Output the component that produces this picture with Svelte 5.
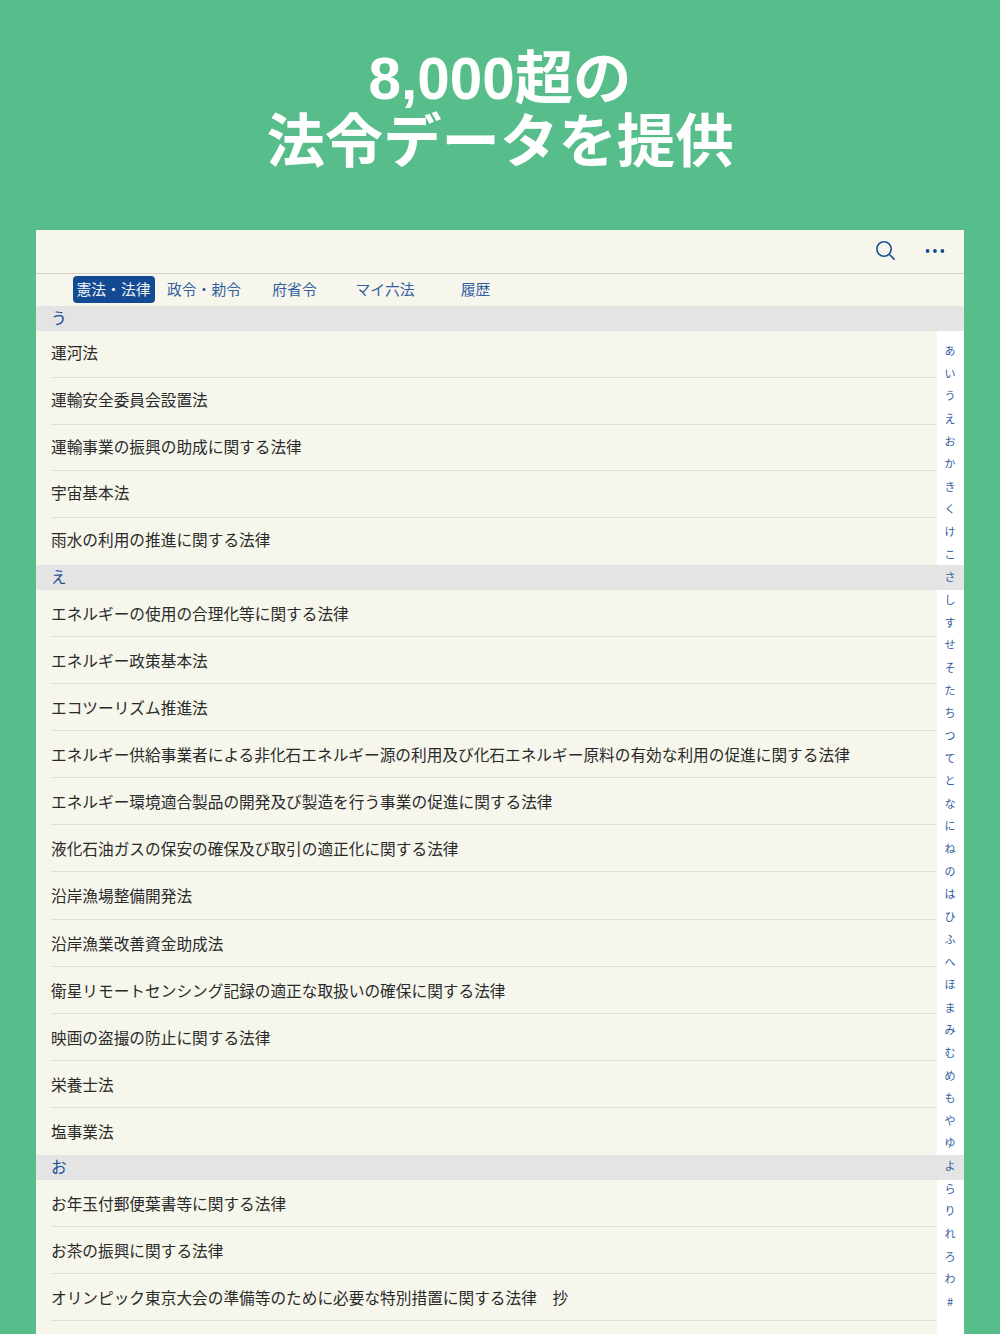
<script>
	const tabs = ['憲法・法律', '政令・勅令', '府省令', 'マイ六法', '履歴'];
	const sections = [
		{
			kana: 'う',
			laws: [
				'運河法',
				'運輸安全委員会設置法',
				'運輸事業の振興の助成に関する法律',
				'宇宙基本法',
				'雨水の利用の推進に関する法律'
			]
		},
		{
			kana: 'え',
			laws: [
				'エネルギーの使用の合理化等に関する法律',
				'エネルギー政策基本法',
				'エコツーリズム推進法',
				'エネルギー供給事業者による非化石エネルギー源の利用及び化石エネルギー原料の有効な利用の促進に関する法律',
				'エネルギー環境適合製品の開発及び製造を行う事業の促進に関する法律',
				'液化石油ガスの保安の確保及び取引の適正化に関する法律',
				'沿岸漁場整備開発法',
				'沿岸漁業改善資金助成法',
				'衛星リモートセンシング記録の適正な取扱いの確保に関する法律',
				'映画の盗撮の防止に関する法律',
				'栄養士法',
				'塩事業法'
			]
		},
		{
			kana: 'お',
			laws: [
				'お年玉付郵便葉書等に関する法律',
				'お茶の振興に関する法律',
				'オリンピック東京大会の準備等のために必要な特別措置に関する法律　抄',
				''
			]
		}
	];
	const index = 'あいうえおかきくけこさしすせそたちつてとなにねのはひふへほまみむめもやゆよらりれろわ#'.split('');
</script>

<div class="page">
	<h1>8,000超の<br />法令データを提供</h1>

	<div class="card">
		<div class="toolbar">
			<svg class="search" width="20" height="20" viewBox="0 0 20 20" fill="none" aria-hidden="true">
				<circle cx="8" cy="8" r="7.2" />
				<path d="M13.2 13.2 L18.6 18.6" />
			</svg>
			<svg class="more" width="20" height="6" viewBox="0 0 20 6" aria-hidden="true">
				<circle cx="2.6" cy="3" r="1.9" />
				<circle cx="10" cy="3" r="1.9" />
				<circle cx="17.4" cy="3" r="1.9" />
			</svg>
		</div>

		<div class="tabs">
			{#each tabs as tab, i}
				<div class="tab" class:active={i === 0}>{tab}</div>
			{/each}
		</div>

		<div class="list">
			{#each sections as section, s}
				<div class="group group-{s}">
					<div class="section">{section.kana}</div>
					{#each section.laws as law}
						<div class="row"><span>{law}</span></div>
					{/each}
				</div>
			{/each}

			<div class="index">
				{#each index as kana}
					<span>{kana}</span>
				{/each}
			</div>
		</div>
	</div>
</div>

<style>
	:global(html),
	:global(body) {
		margin: 0;
		height: 1334px;
		overflow: hidden;
	}

	.page {
		height: 1334px;
		overflow: hidden;
		background: #57bd8a;
		font-family: 'Noto Sans CJK JP', sans-serif;
		display: flex;
		flex-direction: column;
	}

	h1 {
		margin: 0;
		height: 230px;
		box-sizing: border-box;
		padding-top: 47px;
		text-align: center;
		color: #fff;
		font-family: 'Liberation Sans', 'Noto Sans CJK JP', sans-serif;
		font-size: 58.4px;
		font-weight: 700;
		line-height: 63px;
	}

	.card {
		margin: 0 36.5px 0 36px;
		flex: 1;
		min-height: 0;
		background: #f6f6ec;
		display: flex;
		flex-direction: column;
	}

	.toolbar {
		height: 43px;
		flex: none;
		border-bottom: 1px solid #d3d3cb;
		display: flex;
		align-items: flex-start;
		justify-content: flex-end;
		gap: 28.4px;
		padding-right: 19px;
	}

	.search {
		stroke: #1c5096;
		stroke-width: 1.6;
		margin-top: 11px;
	}

	.more {
		fill: #134a94;
		margin-top: 17.5px;
	}

	.tabs {
		height: 32px;
		flex: none;
		display: flex;
		align-items: flex-start;
		padding: 2px 0 0 36.5px;
		box-sizing: border-box;
	}

	.tab {
		width: 82px;
		height: 27px;
		margin-right: 8.5px;
		box-sizing: border-box;
		border-radius: 4px;
		text-align: center;
		line-height: 26px;
		font-size: 14.8px;
		color: #33609f;
		white-space: nowrap;
	}

	.tab.active {
		background: #134a94;
		color: #f2f4f6;
	}

	.list {
		position: relative;
		flex: 1;
		min-height: 0;
		overflow: hidden;
		background: #fff;
	}

	.section {
		height: 25px;
		background: #e4e4e4;
		color: #1c5096;
		font-size: 15.7px;
		line-height: 24px;
		padding-left: 15px;
	}

	.row {
		height: 47px;
		margin-right: 27px;
		box-sizing: border-box;
		padding-left: 15px;
		background: #f6f6ec;
	}

	.row span {
		display: block;
		height: 100%;
		box-sizing: border-box;
		border-bottom: 1px solid #dededa;
		font-size: 15.68px;
		line-height: 48px;
		color: #2a2a2a;
		white-space: nowrap;
	}

	/* the source is a scaled capture, so row pitch differs slightly per group */
	.group-0 .row {
		height: 46.8px;
	}

	.group-0 .row span {
		line-height: 44px;
	}

	.group-1 .row {
		height: 47.08px;
	}

	.group-0 .row:last-child span,
	.group-1 .row:last-child span {
		border-bottom: none;
	}

	.index {
		position: absolute;
		top: 33px;
		right: 0;
		width: 27px;
		display: flex;
		flex-direction: column;
		align-items: center;
		color: #33609f;
		font-size: 11px;
	}

	.index span {
		height: 22.65px;
		line-height: 22.65px;
	}
</style>
